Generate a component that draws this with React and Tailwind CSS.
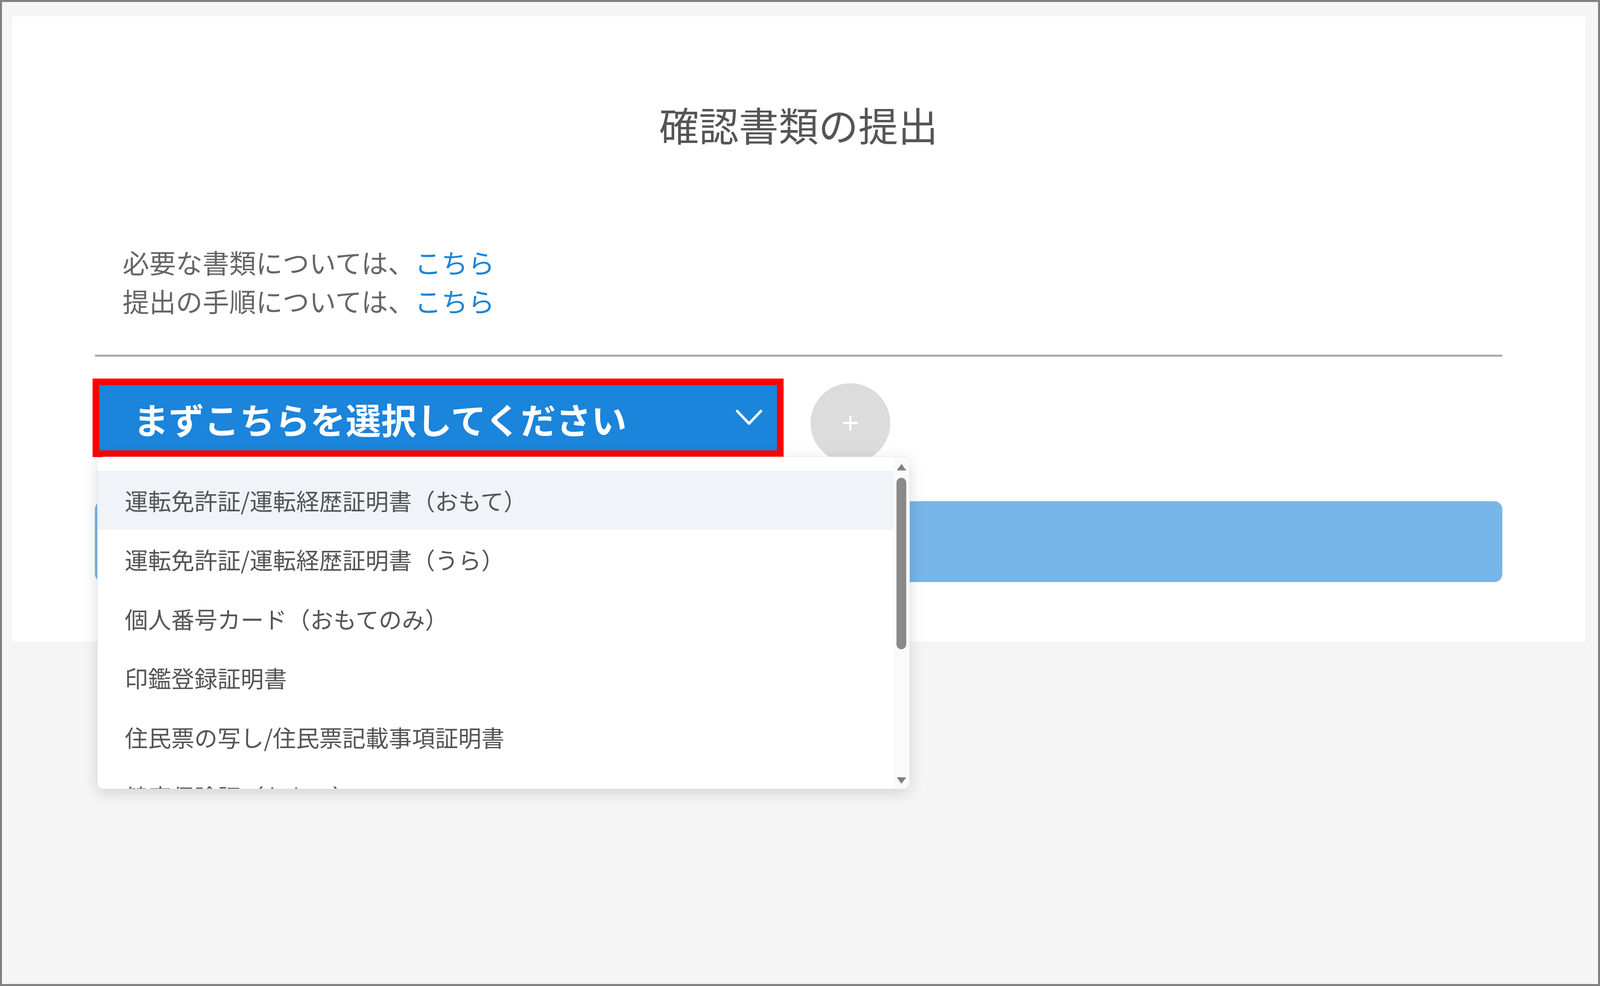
import React from 'react';

const jp = { fontFamily: '"Noto Sans CJK JP", "Noto Sans", sans-serif' };

const options = [
    '運転免許証/運転経歴証明書（おもて）',
    '運転免許証/運転経歴証明書（うら）',
    '個人番号カード（おもてのみ）',
    '印鑑登録証明書',
    '住民票の写し/住民票記載事項証明書',
    '健康保険証（おもて）',
];

const Chevron = () => (
    <svg width="69" height="43" viewBox="0 0 84 52" fill="none">
        <polyline points="5,5 42,44 79,5" stroke="#ffffff" strokeWidth="8" strokeLinecap="round" strokeLinejoin="round" />
    </svg>
);

// fake scrollbar so it keeps the chunky look of the screenshot
const ScrollTrack = () => (
    <div className="w-[41.2px] h-full bg-[#fafafa] flex flex-col items-center pt-[16.5px] pb-[11.5px]">
        <svg width="25.5" height="19" viewBox="0 0 31 23">
            <path d="M15.5 2 L29 20 Q30 22 27 22 L4 22 Q1 22 2 20 Z" fill="#808080" />
        </svg>
        <div className="mt-[17.3px] w-[25.5px] h-[438.8px] rounded-full bg-[#8a8a8a]" />
        <div className="flex-1" />
        <svg width="25.5" height="19" viewBox="0 0 31 23">
            <path d="M15.5 21 L29 3 Q30 1 27 1 L4 1 Q1 1 2 3 Z" fill="#808080" />
        </svg>
    </div>
);

const Dropdown = () => (
    <div className="absolute left-[11.5px] top-[200px] z-10 w-[2080.5px] h-[851.3px] bg-white rounded-[16.5px] border border-[#e0e7f1] shadow-[0_10px_40px_rgba(0,0,0,0.14)] overflow-hidden flex">
        <ul className="flex-1 pt-[34.6px] overflow-hidden">
            {options.map((label, i) => (
                <li
                    key={label}
                    className={`h-[151.5px] flex items-center pl-[70px] text-[59.3px] text-[#555555] whitespace-nowrap ${i === 0 ? 'bg-[#f0f3f8]' : ''}`}
                >
                    {label}
                </li>
            ))}
        </ul>
        <ScrollTrack />
    </div>
);

export default function App() {
    return (
        <div className="w-screen h-screen border-[5.8px] border-[#808080] bg-[#f5f5f5] pt-[37px] pl-[25.5px] pr-[33px] overflow-hidden" style={jp}>
            <div className="bg-white px-[212.4px] pt-[201.7px] pb-[151.5px]">
                <h1 className="text-center text-[102px] leading-[148.2px] font-normal text-[#555555]">確認書類の提出</h1>

                <div className="mt-[228.9px] pl-[70.8px] text-[68.3px] leading-[99.6px] text-[#666666]">
                    <p>必要な書類については、<a className="text-[#1a85d6]">こちら</a></p>
                    <p>提出の手順については、<a className="text-[#1a85d6]">こちら</a></p>
                </div>

                <div className="mt-[88.1px] h-[4.9px] bg-[#a8a8a8]" />

                <div className="mt-[56px] flex items-start gap-[69.2px]">
                    <div className="relative -ml-[5.8px]">
                        <div className="w-[1768.5px] h-[200.9px] border-[17.3px] border-[#ff0000]">
                            <div className="h-full bg-[#1b84db] flex items-center justify-between pl-[87.3px] pr-[37px]">
                                <span className="text-[90.6px] font-bold text-white leading-none pt-[5px]">まずこちらを選択してください</span>
                                <Chevron />
                            </div>
                        </div>
                        <Dropdown />
                    </div>
                    <button className="mt-[12.3px] w-[204.2px] h-[204.2px] rounded-full bg-[#dcdcdc] flex items-center justify-center">
                        <svg width="37.9" height="37.9" viewBox="0 0 46 46">
                            <path d="M23 0 V46 M0 23 H46" stroke="#ffffff" strokeWidth="7" />
                        </svg>
                    </button>
                </div>

                <div className="mt-[98px] h-[206.7px] rounded-[20.6px] bg-[#78b5e9]" />
            </div>
        </div>
    );
}
